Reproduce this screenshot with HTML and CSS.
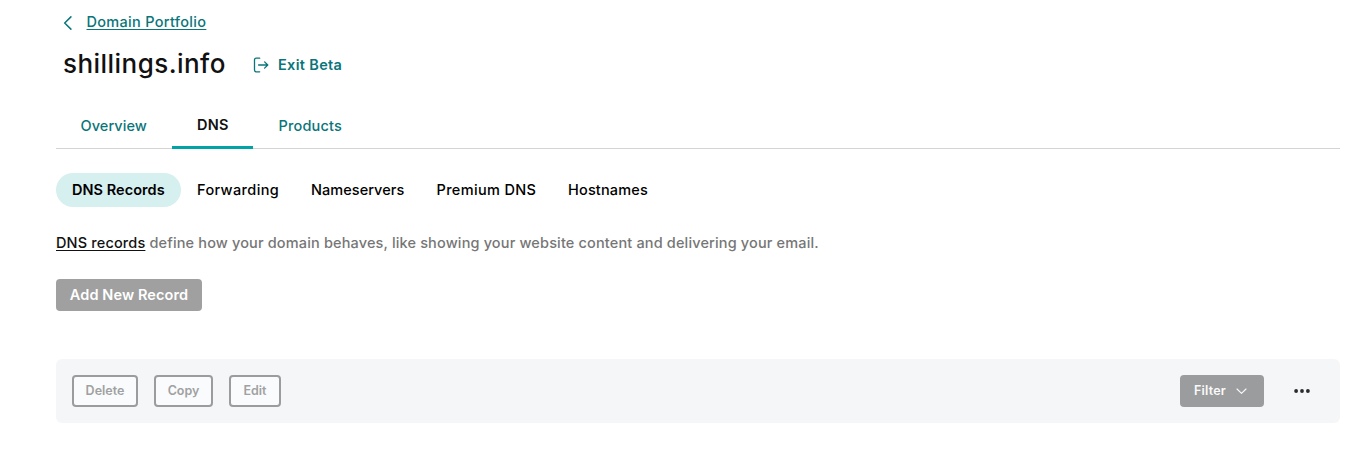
FILE: index.html
```html
<!DOCTYPE html>
<html lang="en">
<head>
<meta charset="utf-8">
<title>shillings.info – DNS</title>
<link rel="stylesheet" href="styles.css">
</head>
<body>
<main class="page">
  <nav class="crumb">
    <svg class="crumb-icon" width="9" height="14" viewBox="0 0 9 14"><path d="M7.9 .9 1.7 7l6.2 6.1"/></svg>
    <a class="crumb-link" href="#">Domain Portfolio</a>
  </nav>
  <header class="title-row">
    <h1 class="title">shillings.info</h1>
    <a class="exit" href="#">
      <svg class="exit-icon" width="16" height="16" viewBox="0 0 16 16"><path d="M6.7 1.2H3.2C2.1 1.2 1.5 1.9 1.5 2.9v10.2c0 1 .6 1.7 1.7 1.7h3.5M5.6 8h9.2M11.6 4.9 14.8 8l-3.2 3.1"/></svg>
      <span>Exit Beta</span>
    </a>
  </header>
  <nav class="tabs">
    <a class="tab tab-overview" href="#">Overview</a>
    <a class="tab tab-active" href="#">DNS</a>
    <a class="tab tab-products" href="#">Products</a>
  </nav>
  <nav class="pills">
    <a class="pill pill-active" href="#">DNS Records</a>
    <a class="pill pill-forwarding" href="#">Forwarding</a>
    <a class="pill pill-nameservers" href="#">Nameservers</a>
    <a class="pill pill-premium" href="#">Premium DNS</a>
    <a class="pill pill-hostnames" href="#">Hostnames</a>
  </nav>
  <p class="intro"><a class="intro-link" href="#">DNS records</a> define how your domain behaves, like showing your website content and delivering your email.</p>
  <button class="add" disabled>Add New Record</button>
  <section class="toolbar">
    <button class="outline outline-delete" disabled>Delete</button>
    <button class="outline outline-copy" disabled>Copy</button>
    <button class="outline outline-edit" disabled>Edit</button>
    <button class="filter" disabled>
      <span class="filter-label">Filter</span>
      <svg class="filter-icon" width="11" height="7" viewBox="0 0 11 7"><path d="M1 1l4.5 4.3L10 1"/></svg>
    </button>
    <button class="more" aria-label="More actions">
      <svg width="16" height="4" viewBox="0 0 16 4"><circle cx="2.1" cy="2" r="1.9"/><circle cx="8" cy="2" r="1.9"/><circle cx="13.9" cy="2" r="1.9"/></svg>
    </button>
  </section>
</main>
</body>
</html>
```
FILE: styles.css
```css
* { box-sizing: border-box; }
body {
  margin: 0;
  background: #fff;
  color: #111;
  font: 500 14.5px/24px Inter, "Noto Sans", sans-serif;
}
a { text-decoration: none; color: inherit; }
button { font: inherit; margin: 0; padding: 0; border: 0; }
svg { display: block; flex: none; }
path { fill: none; stroke: currentColor; stroke-width: 1.5; stroke-linecap: round; stroke-linejoin: round; }
.page { padding: 10px 11px 0 56px; }
.crumb { display: flex; align-items: center; height: 24px; padding-left: 7px; color: #09757a; }
.crumb-icon { margin-top: 2px; }
.crumb-link { margin-left: 14.5px; letter-spacing: .31px; text-decoration: underline; text-underline-offset: 2px; text-decoration-thickness: 1px; }
.title-row { display: flex; align-items: center; height: 60px; padding-left: 7px; }
.title { margin: 0; width: 190px; font-size: 26px; font-weight: 500; line-height: 36px; letter-spacing: .45px; }
.exit { display: flex; align-items: center; gap: 9px; margin-top: 2px; color: #09757a; font-weight: 600; letter-spacing: .33px; }
.exit-icon path { stroke-width: 1.3; }
.tabs { display: flex; height: 55px; border-bottom: 1px solid #d4d4d4; color: #09757a; }
.tab { padding-top: 20px; height: 55px; }
.tab-overview { width: 116px; padding-left: 24.5px; letter-spacing: .08px; }
.tab-active { width: 81px; padding: 19px 0 0 25px; color: #111; font-weight: 600; letter-spacing: .2px; border-bottom: 3px solid #00a4a6; border-radius: 2px 2px 0 0; }
.tab-products { padding-left: 25.5px; letter-spacing: .18px; }
.pills { display: flex; height: 34px; margin-top: 24px; color: #000; }
.pill { line-height: 34px; padding-left: 16px; white-space: nowrap; }
.pill-active { width: 125px; border-radius: 17px; background: #d6efef; font-weight: 600; letter-spacing: .05px; }
.pill-forwarding { width: 114px; letter-spacing: .37px; }
.pill-nameservers { width: 125px; letter-spacing: .05px; }
.pill-premium { width: 132px; padding-left: 16.5px; letter-spacing: .35px; }
.pill-hostnames { letter-spacing: .16px; }
.intro { margin: 24px 0 0; color: #767676; letter-spacing: .15px; white-space: nowrap; }
.intro-link { color: #111; text-decoration: underline; text-underline-offset: 2px; }
.add { display: block; width: 146px; height: 32px; margin-top: 24px; border-radius: 4px; background: #a0a0a0; color: #fff; font-weight: 600; letter-spacing: .11px; }
.toolbar { display: flex; align-items: center; height: 64px; margin-top: 48px; padding: 0 16px; border-radius: 6px; background: #f5f6f8; font-size: 12.5px; font-weight: 600; }
.outline { height: 32px; margin-right: 16px; padding-bottom: 1px; border: 2px solid #9b9c9d; border-radius: 4px; background: #fafbfc; color: #a0a1a2; }
.outline-delete { width: 66px; }
.outline-copy { width: 59px; }
.outline-edit { width: 52px; }
.filter { display: flex; align-items: center; gap: 10px; width: 84px; height: 32px; margin-left: auto; padding-left: 14px; border-radius: 4px; background: #9b9c9d; color: #fafafa; letter-spacing: .2px; }
.filter-label { margin-top: -1px; }
.filter-icon { margin-top: 1px; }
.filter-icon path { stroke-width: 1.1; }
.more { display: flex; width: 44px; height: 32px; margin-left: 16px; align-items: center; justify-content: center; background: transparent; color: #2b2b2b; }
.more circle { fill: currentColor; }
```
